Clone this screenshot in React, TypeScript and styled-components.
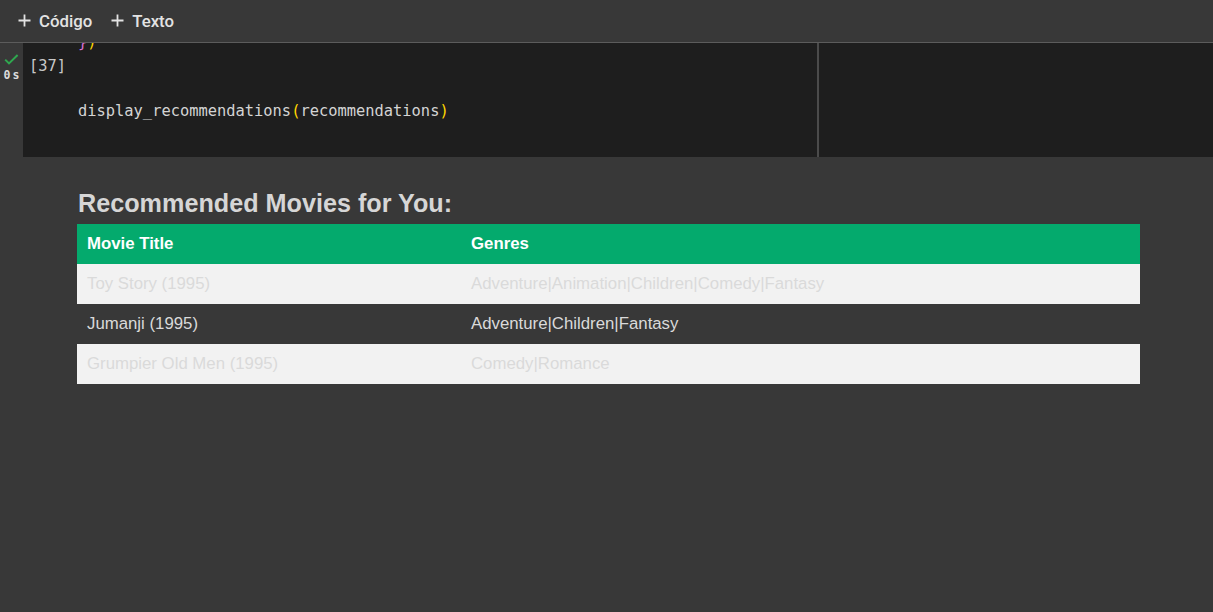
import React from "react";
import styled, { createGlobalStyle } from "styled-components";

const GlobalStyle = createGlobalStyle`
  html, body {
    margin: 0;
    padding: 0;
    background: #383838;
    height: 100%;
  }
  #root {
    min-height: 612px;
    background: #383838;
  }
`;

const movies = [
  { title: "Toy Story (1995)", genres: "Adventure|Animation|Children|Comedy|Fantasy" },
  { title: "Jumanji (1995)", genres: "Adventure|Children|Fantasy" },
  { title: "Grumpier Old Men (1995)", genres: "Comedy|Romance" },
];

function PlusIcon() {
  return (
    <svg width="13" height="13" viewBox="0 0 13 13">
      <path d="M6.5 0.5v12M0.5 6.5h12" stroke="#e3e3e3" strokeWidth="1.8" fill="none" />
    </svg>
  );
}

function CheckIcon() {
  return (
    <svg width="15" height="11" viewBox="0 0 15 11">
      <path d="M1.2 5.6l3.8 3.8 8.6-8.4" stroke="#2fa84f" strokeWidth="2" fill="none" />
    </svg>
  );
}

export default function App() {
  return (
    <Page>
      <GlobalStyle />
      <Toolbar>
        <ToolButton>
          <PlusIcon />
          Código
        </ToolButton>
        <ToolButton>
          <PlusIcon />
          Texto
        </ToolButton>
      </Toolbar>

      <Cell>
        <Gutter>
          <CheckIcon />
          <Time>0s</Time>
        </Gutter>
        <Editor>
          <Count>[37]</Count>
          <Code>
            <Line>
              <Bracket color="#da70d6">{"}"}</Bracket>
              <Bracket color="#ffd700">)</Bracket>
            </Line>
            <Line>&nbsp;</Line>
            <Line>&nbsp;</Line>
            <Line>
              display_recommendations<Bracket color="#ffd700">(</Bracket>recommendations
              <Bracket color="#ffd700">)</Bracket>
            </Line>
          </Code>
          <Rest />
        </Editor>
      </Cell>

      <Output>
        <Heading>Recommended Movies for You:</Heading>
        <Table>
          <thead>
            <tr>
              <Th $first>Movie Title</Th>
              <Th>Genres</Th>
            </tr>
          </thead>
          <tbody>
            {movies.map((m, i) => (
              <Row key={m.title} $striped={i % 2 === 0}>
                <Td>{m.title}</Td>
                <Td>{m.genres}</Td>
              </Row>
            ))}
          </tbody>
        </Table>
      </Output>
    </Page>
  );
}

const Page = styled.div`
  width: 1213px;
  min-height: 612px;
  background: #383838;
  font-family: Roboto, "Liberation Sans", Arial, sans-serif;
`;

const Toolbar = styled.div`
  height: 42px;
  display: flex;
  align-items: center;
  gap: 19px;
  padding-left: 18px;
  border-bottom: 1px solid #5c5c5c;
  box-sizing: content-box;
`;

const ToolButton = styled.div`
  display: flex;
  align-items: center;
  gap: 8px;
  color: #e3e3e3;
  font-family: Roboto, "Liberation Sans", sans-serif;
  font-size: 16.8px;
  font-weight: 500;
  padding-bottom: 1px;
`;

const Cell = styled.div`
  display: flex;
  height: 114px;
`;

const Gutter = styled.div`
  width: 23px;
  display: flex;
  flex-direction: column;
  align-items: center;
  padding-top: 11px;
  gap: 4px;
  box-sizing: border-box;
`;

const Time = styled.div`
  font-family: "DejaVu Sans Mono", "Liberation Mono", monospace;
  font-size: 11.5px;
  font-weight: bold;
  color: #dcdcdc;
  letter-spacing: 2px;
  margin-left: 2px;
  line-height: 13px;
`;

const Editor = styled.div`
  flex: 1;
  display: grid;
  grid-template-columns: 55px 741px 1fr;
  background: #1e1e1e;
  overflow: hidden;
  font-family: "DejaVu Sans Mono", "Liberation Mono", monospace;
  font-size: 15.4px;
  line-height: 23px;
`;

const Count = styled.div`
  padding: 12px 0 0 6px;
  color: #c8c8c8;
`;

const Code = styled.div`
  margin-top: -12px;
  color: #d4d4d4;
  border-right: 2px solid #4b4b4b;
  white-space: pre;
`;

const Line = styled.div`
  height: 23px;
`;

const Bracket = styled.span<{ color: string }>`
  color: ${(p) => p.color};
`;

const Rest = styled.div``;

const Output = styled.div`
  padding: 32px 0 0 77px;
`;

const Heading = styled.h2`
  margin: 0 0 6px 1px;
  font-family: "Liberation Sans", Arial, sans-serif;
  font-size: 25.2px;
  line-height: 29px;
  font-weight: bold;
  color: #d6d6d6;
`;

const Table = styled.table`
  width: 1063px;
  border-collapse: collapse;
  font-family: "Liberation Sans", Arial, sans-serif;
  font-size: 16.8px;
`;

const Th = styled.th<{ $first?: boolean }>`
  background: #04aa6d;
  color: #ffffff;
  text-align: left;
  font-weight: bold;
  height: 40px;
  padding: 0 10px;
  width: ${(p) => (p.$first ? "364px" : "auto")};
`;

const Row = styled.tr<{ $striped: boolean }>`
  background: ${(p) => (p.$striped ? "#f2f2f2" : "transparent")};
`;

const Td = styled.td`
  height: 40px;
  padding: 0 10px;
  color: #dadada;
`;
